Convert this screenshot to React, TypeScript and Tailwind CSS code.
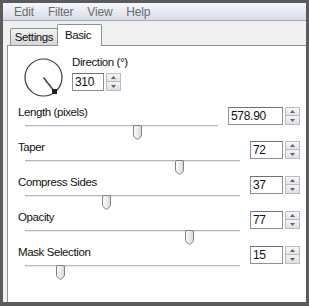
import React from "react";

const font = { fontFamily: '"Liberation Sans", Arial, sans-serif' };

function Spinner() {
  return (
    <div className="ml-[2px] flex h-[18px] w-[15px] flex-col">
      <div className="flex h-[9px] items-center justify-center border border-[#b9bcc2] bg-gradient-to-b from-[#f9f9f9] to-[#e2e3e6]">
        <svg width="5" height="3" viewBox="0 0 5 3">
          <path d="M0 3 L2.5 0 L5 3 Z" fill="#5a6274" />
        </svg>
      </div>
      <div className="flex h-[9px] items-center justify-center border border-t-0 border-[#b9bcc2] bg-gradient-to-b from-[#f4f4f5] to-[#dfe0e3]">
        <svg width="5" height="3" viewBox="0 0 5 3">
          <path d="M0 0 L2.5 3 L5 0 Z" fill="#5a6274" />
        </svg>
      </div>
    </div>
  );
}

function NumBox({ value, width }: { value: string; width: string }) {
  return (
    <div className="flex">
      <div
        className={`${width} flex h-[18px] items-center border border-[#8e9096] border-t-[#6f7178] bg-white pl-[2px] text-[12px] leading-none tracking-[-0.3px] text-[#111]`}
      >
        {value}
      </div>
      <Spinner />
    </div>
  );
}

function Thumb() {
  return (
    <svg width="9" height="15" viewBox="0 0 9 15">
      <defs>
        <linearGradient id="thumbFill" x1="0" y1="0" x2="1" y2="0">
          <stop offset="0" stopColor="#ffffff" />
          <stop offset="1" stopColor="#d8d8d8" />
        </linearGradient>
      </defs>
      <path
        d="M2 0.5 H7 Q8.5 0.5 8.5 2 V10.5 Q8.5 12 4.5 14.5 Q0.5 12 0.5 10.5 V2 Q0.5 0.5 2 0.5 Z"
        fill="url(#thumbFill)"
        stroke="#7d8086"
      />
    </svg>
  );
}

function SliderRow({
  label,
  value,
  thumb,
  trackWidth,
  boxWidth,
  boxTop,
}: {
  label: string;
  value: string;
  thumb: number;
  trackWidth: string;
  boxWidth: string;
  boxTop: string;
}) {
  return (
    <div className="flex h-[35px]">
      <div className="flex-1 pl-[10px]">
        <div className="h-[14px] text-[11.5px] leading-[14px] tracking-[-0.4px] text-[#111]">
          {label}
        </div>
        <div className={`relative ml-[7px] h-[15px] ${trackWidth}`}>
          <div className="mt-[6px] h-[2px] border-t border-[#b4b6b9] bg-[#ececec]" />
          <div className="absolute top-0" style={{ left: thumb }}>
            <Thumb />
          </div>
        </div>
      </div>
      <div className={`pr-[6px] ${boxTop}`}>
        <NumBox value={value} width={boxWidth} />
      </div>
    </div>
  );
}

function Dial() {
  return (
    <svg width="40" height="40" viewBox="0 0 40 40">
      <circle cx="19.5" cy="19.5" r="18.5" fill="none" stroke="#3a3a3a" strokeWidth="1.2" />
      <line x1="19.5" y1="19.5" x2="30" y2="33" stroke="#3a3a3a" strokeWidth="1.4" />
      <rect x="28" y="31" width="5" height="5" fill="#1f1f1f" />
    </svg>
  );
}

export default function App() {
  return (
    <div
      className="flex h-[306px] w-[309px] flex-col bg-[#5b5b5d] px-[3px] pb-[4px] pt-[3px]"
      style={font}
    >
      <div className="flex h-[18px] shrink-0 items-center gap-[14px] border-b border-[#a3a7b0] bg-gradient-to-b from-[#f7f8fc] to-[#d7dce8] pl-[11px] pt-[1px] text-[12px] tracking-[-0.2px] text-[#6b6b6b]">
        <span>Edit</span>
        <span>Filter</span>
        <span>View</span>
        <span>Help</span>
      </div>

      <div className="flex flex-1 flex-col bg-[#f0f0f0] pl-[4px]">
        <div className="flex h-[24px] shrink-0 items-end pl-[3px]">
          <div className="flex h-[17px] w-[48px] items-center justify-center rounded-t-[2px] border border-b-0 border-[#8d9097] bg-gradient-to-b from-[#f3f3f3] to-[#d6d6d6] pt-[1px] text-[11.5px] tracking-[-0.4px] text-[#111]">
            Settings
          </div>
          <div className="relative z-10 -mb-px -ml-px h-[22px] w-[45px] rounded-t-[2px] border border-b-0 border-[#8d9097] bg-white pl-[7px] pt-[2px] text-[11.5px] tracking-[-0.4px] text-[#111]">
            Basic
          </div>
        </div>

        <div className="flex flex-1 flex-col border-l border-t border-[#8d9097] bg-white">
          <div className="flex h-[59px] shrink-0">
            <div className="ml-[16px] mt-[12px]">
              <Dial />
            </div>
            <div className="ml-[8px] mt-[9px]">
              <div className="h-[14px] text-[11.5px] leading-[14px] tracking-[-0.4px] text-[#111]">
                Direction (°)
              </div>
              <div className="mt-[4px]">
                <NumBox value="310" width="w-[32px]" />
              </div>
            </div>
          </div>

          <SliderRow label="Length (pixels)" value="578.90" thumb={108} trackWidth="w-[193px]" boxWidth="w-[55px]" boxTop="pt-[2px]" />
          <SliderRow label="Taper" value="72" thumb={150} trackWidth="w-[215px]" boxWidth="w-[33px]" boxTop="pt-[1px]" />
          <SliderRow label="Compress Sides" value="37" thumb={77} trackWidth="w-[215px]" boxWidth="w-[33px]" boxTop="pt-[1px]" />
          <SliderRow label="Opacity" value="77" thumb={160} trackWidth="w-[215px]" boxWidth="w-[33px]" boxTop="pt-[1px]" />
          <SliderRow label="Mask Selection" value="15" thumb={31} trackWidth="w-[215px]" boxWidth="w-[33px]" boxTop="pt-[1px]" />
        </div>
      </div>
    </div>
  );
}
